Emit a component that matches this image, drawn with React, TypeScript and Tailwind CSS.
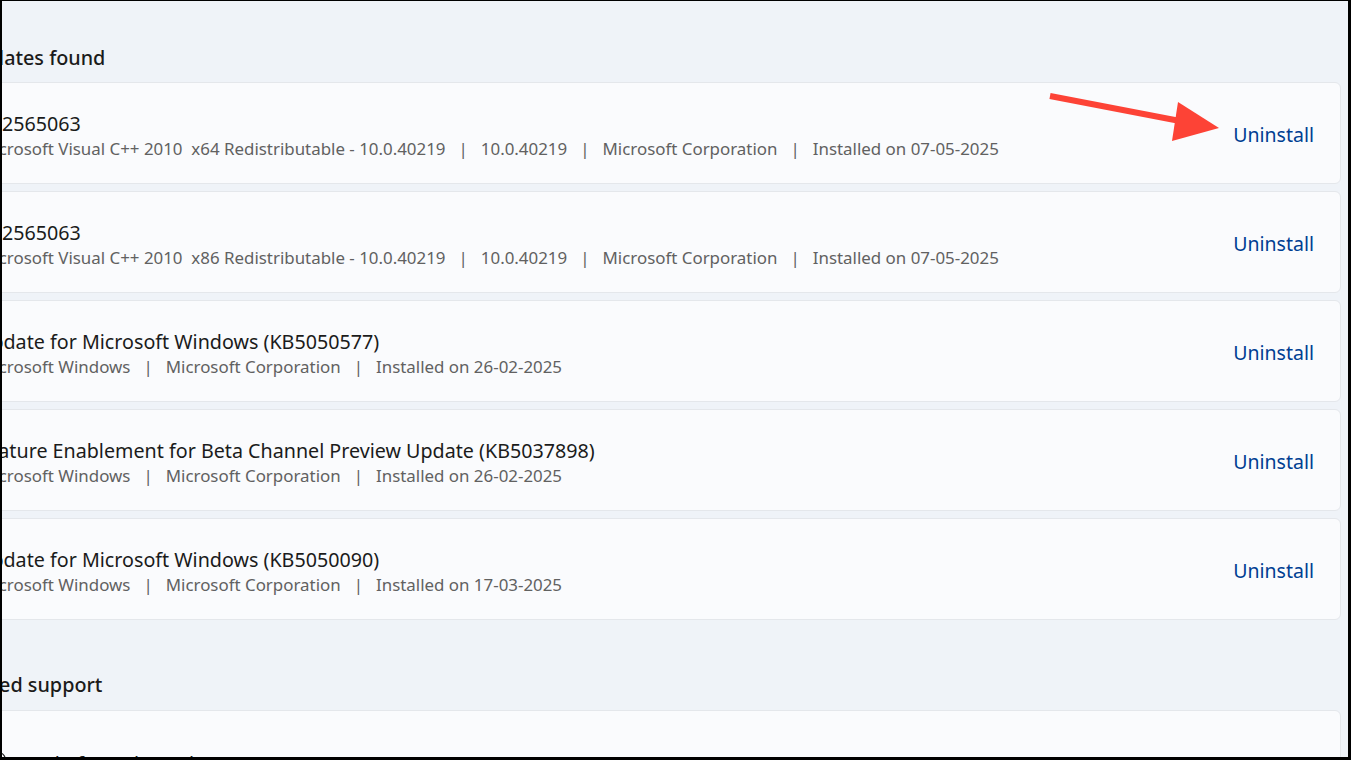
import { Globe } from "lucide-react";

const updates = [
  {
    title: "KB2565063",
    meta: [
      "Microsoft Visual C++ 2010  x64 Redistributable - 10.0.40219",
      "10.0.40219",
      "Microsoft Corporation",
      "Installed on 07-05-2025",
    ],
  },
  {
    title: "KB2565063",
    meta: [
      "Microsoft Visual C++ 2010  x86 Redistributable - 10.0.40219",
      "10.0.40219",
      "Microsoft Corporation",
      "Installed on 07-05-2025",
    ],
  },
  {
    title: "Update for Microsoft Windows (KB5050577)",
    meta: ["Microsoft Windows", "Microsoft Corporation", "Installed on 26-02-2025"],
  },
  {
    title: "Feature Enablement for Beta Channel Preview Update (KB5037898)",
    meta: ["Microsoft Windows", "Microsoft Corporation", "Installed on 26-02-2025"],
  },
  {
    title: "Update for Microsoft Windows (KB5050090)",
    meta: ["Microsoft Windows", "Microsoft Corporation", "Installed on 17-03-2025"],
  },
];

const FONT = "font-['Segoe_UI','Noto_Sans',sans-serif]";

function UpdateCard({ title, meta }: { title: string; meta: string[] }) {
  return (
    <div className="flex h-[102px] items-center justify-between rounded-md border border-[#e4e7eb] bg-[#fafbfd] pl-[14px] pr-[26px]">
      <div className="min-w-0 pt-[5px]">
        <p className="ml-[-2px] text-[19.7px]/[26px] text-[#1b1b1b]">{title}</p>
        <p className="whitespace-pre text-[16.9px]/[24px] text-[#616161]">
          {meta.map((item, i) => (
            <span key={i}>
              {i > 0 && <span className="mx-[13px]">|</span>}
              {item}
            </span>
          ))}
        </p>
      </div>
      <button className="pt-[4px] text-[19.5px] text-[#003e92]">Uninstall</button>
    </div>
  );
}

export default function App() {
  return (
    <div className={`h-[760px] w-[1351px] bg-black pb-[3px] pl-[2px] pr-[3px] pt-px ${FONT}`}>
      <div className="relative h-full overflow-hidden bg-[#eff3f8]">
        <div className="ml-[-38px] mr-[7px]">
          <h2 className="ml-[1px] pt-[43px] text-[19.8px]/[28px] font-medium text-[#1b1b1b]">
            Updates found
          </h2>
          <div className="mt-[10px] flex flex-col gap-[7px]">
            {updates.map((u, i) => (
              <UpdateCard key={i} title={u.title} meta={u.meta} />
            ))}
          </div>
          <h2 className="ml-[-13px] mt-[51px] text-[19.8px]/[28px] font-medium text-[#1b1b1b]">
            Related support
          </h2>
          <div className="mt-[11px] flex h-[70px] items-start gap-[22px] rounded-md border border-[#e4e7eb] bg-[#fafbfd] pl-[24px] pt-[40px]">
            <Globe className="size-[18px] shrink-0 text-[#1b1b1b]" strokeWidth={1.5} />
            <span className="text-[19.7px]/[26px] text-[#1b1b1b]">Help from the web</span>
          </div>
        </div>

        <svg
          className="absolute left-[1038px] top-[86px]"
          width="190"
          height="60"
          viewBox="0 0 190 60"
        >
          <line x1="10" y1="9" x2="140" y2="34" stroke="#fd4336" strokeWidth="6" />
          <polygon points="138,15 179,41 132,54" fill="#fd4336" />
        </svg>
      </div>
    </div>
  );
}
